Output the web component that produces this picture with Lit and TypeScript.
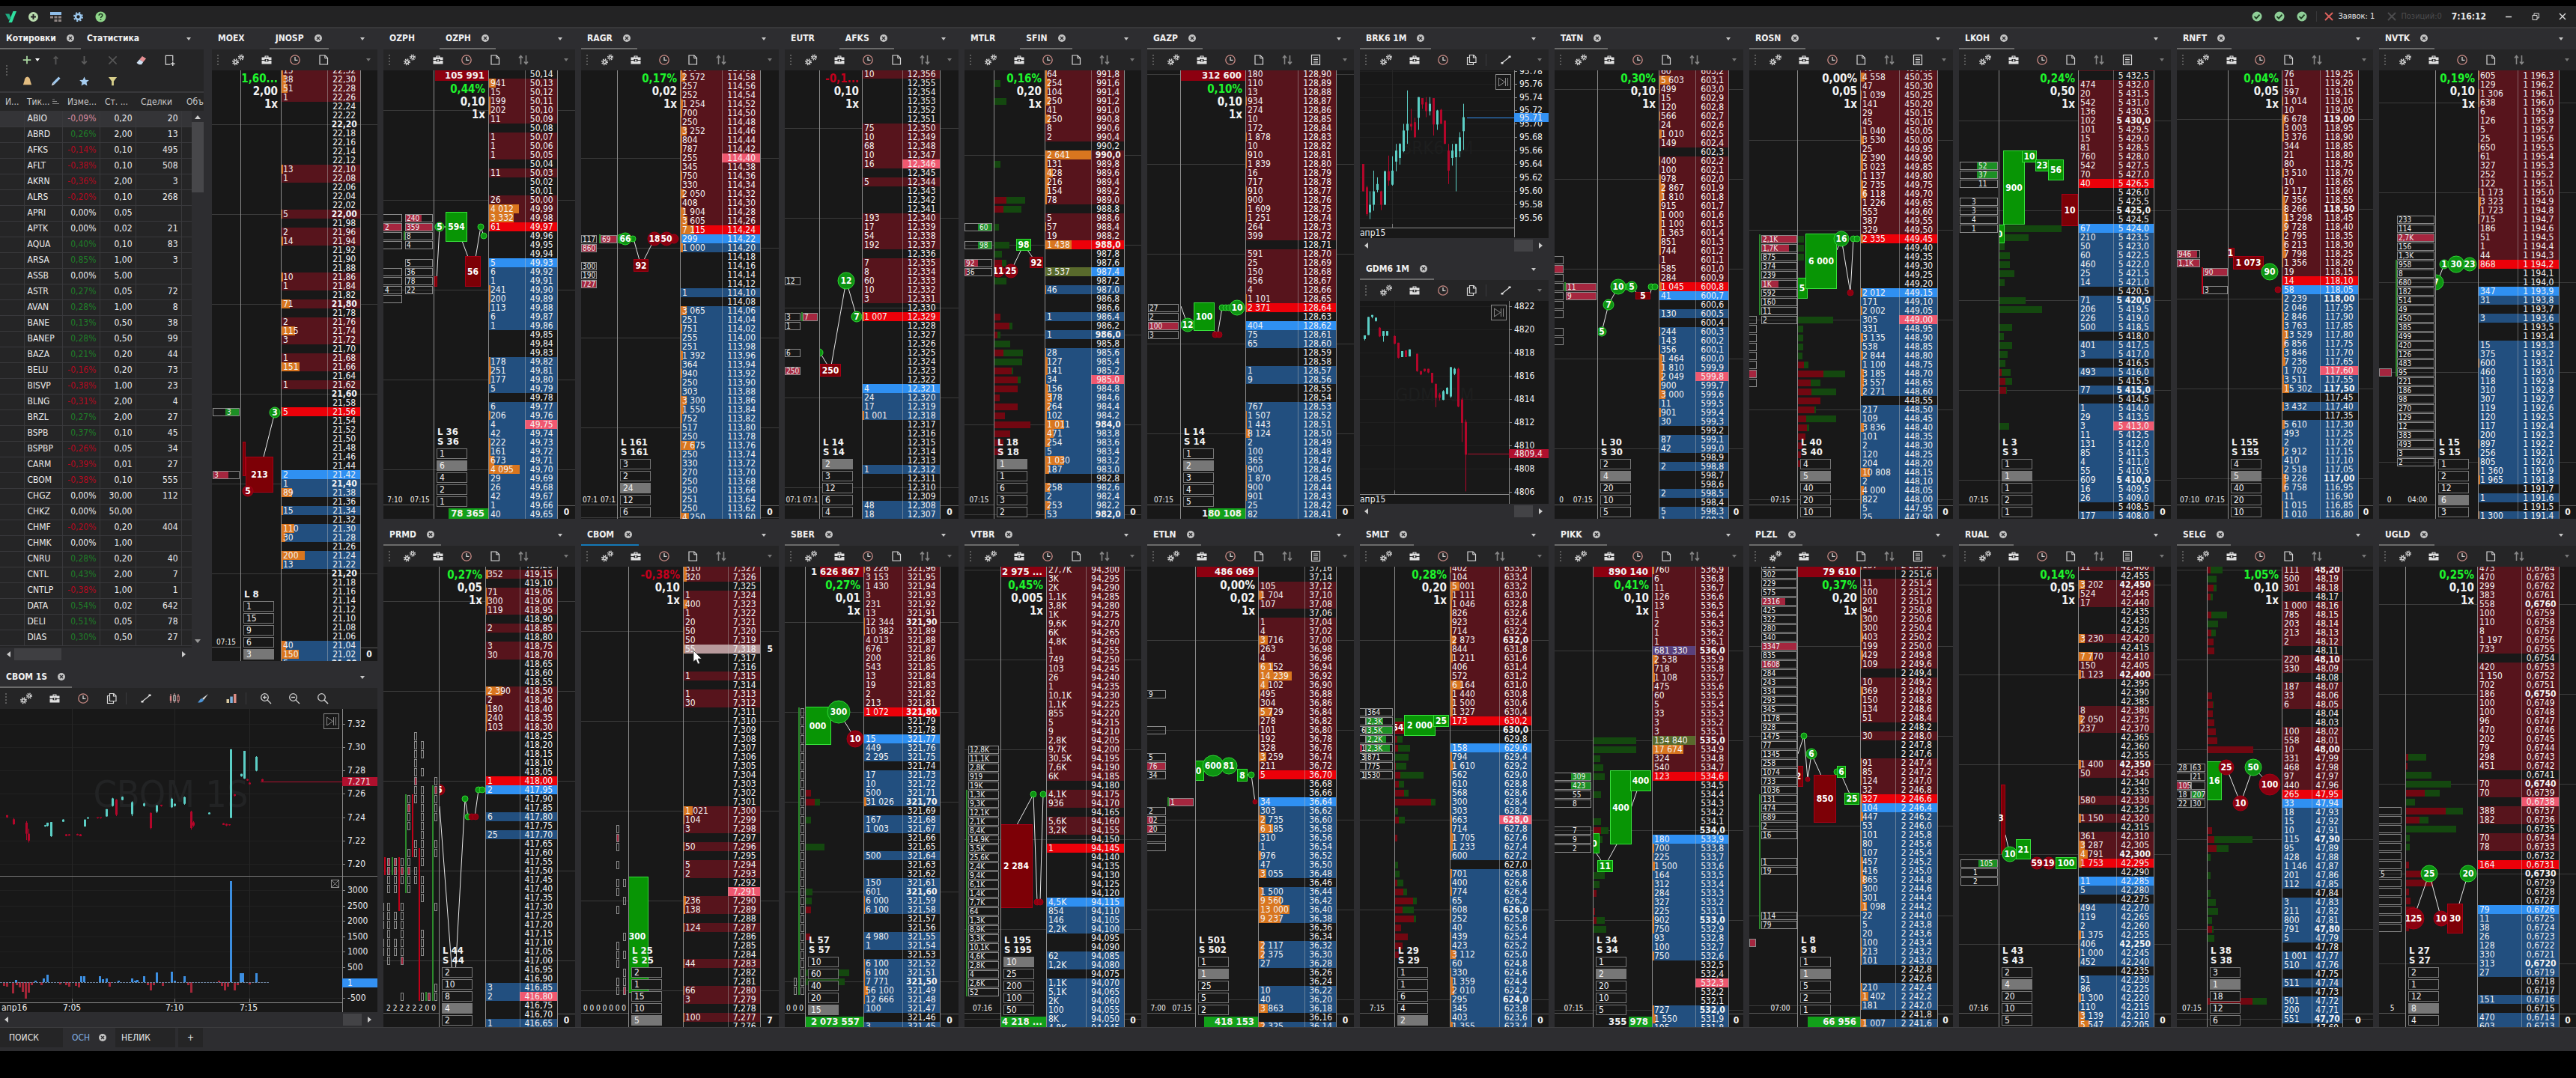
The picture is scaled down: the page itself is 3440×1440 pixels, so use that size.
import { LitElement, html, svg, css, nothing } from "lit";
import { customElement, property } from "lit/decorators.js";
import { classMap } from "lit/directives/class-map.js";

const base = css`
  * { box-sizing: border-box; }
  button { font: inherit; color: inherit; background: none; border: 0; padding: 0; margin: 0; cursor: default; }
  svg { display: block; }
`;

/* ---------- icons (16 x 16) ---------- */
const gear = (cx: number, cy: number, r: number, color: string, hole = "#252526") => svg`
  <circle cx=${cx} cy=${cy} r=${r} fill=${color}/>
  <circle cx=${cx} cy=${cy} r=${r + 0.8} fill="none" stroke=${color} stroke-width="1.8" stroke-dasharray=${((r + 0.8) * Math.PI) / 8}/>
  <circle cx=${cx} cy=${cy} r=${r * 0.45} fill=${hole}/>`;

const ICONS: Record<string, unknown> = {
  gears: svg`${gear(4.5, 10.8, 2.8, "#d6d6d6")}${gear(12, 4.6, 2.4, "#d6d6d6")}`,
  brief: svg`<path d="M5.500 4.500V2.500h5v2h4V8h-4V7h-5v1h-4V4.500zM6.700 4.500h2.600V3.500H6.700z" fill="#e0e0e0"/><path d="M1.500 9h4v1.200h5V9h4v4.500h-13z" fill="#e0e0e0"/><rect x="7" y="7.600" width="2" height="2" fill="#e0e0e0"/>`,
  clock: svg`<circle cx="8" cy="8" r="6.200" fill="none" stroke="#c98a84" stroke-width="1.300"/><path d="M8 4v4.400h3.500" fill="none" stroke="#d8d8d8" stroke-width="1.300"/>`,
  page: svg`<path d="M3 2h7l3.500 3.500V14H3z" fill="none" stroke="#d8d8d8" stroke-width="1.200"/><path d="M9.800 2v3.800h3.700" fill="none" stroke="#d8d8d8"/>`,
  copy: svg`<path d="M5.500 1.500h5.500l3 3v7h-8.500z" fill="none" stroke="#d8d8d8" stroke-width="1.200"/><path d="M10.500 1.500v3.500H14M5.500 4.500h-3v10h8v-3" fill="none" stroke="#d8d8d8" stroke-width="1.200"/>`,
  sort: svg`<path d="M4.500 14V3M2 5.500 4.500 2.500 7 5.500M11.500 2v11M9 10.500l2.500 3 2.500-3" fill="none" stroke="#868686" stroke-width="1.600"/>`,
  list: svg`<rect x="2.500" y="1.500" width="11" height="13" fill="none" stroke="#d8d8d8" stroke-width="1.200"/><path d="M5 5h6M5 7.500h6M5 10h6M5 12h6" stroke="#d8d8d8"/>`,
  line: svg`<path d="M3 12 13 4" stroke="#d8d8d8" stroke-width="1.200"/><rect x="1.500" y="11" width="3" height="2.500" fill="#e6e6e6"/><rect x="11.500" y="2.500" width="3" height="2.500" fill="#e6e6e6"/>`,
  candles: svg`<path d="M3 2v12M8 1v13M13 2v12" stroke="#d99"/><rect x="1.800" y="5" width="2.400" height="6" fill="#d88"/><rect x="6.800" y="4" width="2.400" height="7" fill="#252526" stroke="#d8d8d8"/><rect x="11.800" y="5" width="2.400" height="6" fill="#252526" stroke="#d88"/>`,
  brush: svg`<path d="M15 2 7 8l2 2z" fill="#dcdcdc"/><path d="M7 8l2 2c-1 3-4 3.500-8 3.500 2-1.500 2.500-5 6-5.500z" fill="#4d94d6"/>`,
  bars: svg`<rect x="1.500" y="9" width="3.500" height="5" fill="#d9c9a0"/><rect x="6.300" y="5.500" width="3.500" height="8.500" fill="#7fb2de"/><rect x="11" y="2" width="3.500" height="12" fill="#dd8d84"/>`,
  zin: svg`<circle cx="6.500" cy="6.500" r="4.800" fill="none" stroke="#d0d0d0" stroke-width="1.300"/><path d="M10 10l5 5M4 6.500h5M6.500 4v5" stroke="#d0d0d0" stroke-width="1.300"/>`,
  zout: svg`<circle cx="6.500" cy="6.500" r="4.800" fill="none" stroke="#d0d0d0" stroke-width="1.300"/><path d="M10 10l5 5M4 6.500h5" stroke="#d0d0d0" stroke-width="1.300"/>`,
  zoom: svg`<circle cx="6.500" cy="6.500" r="4.800" fill="none" stroke="#d0d0d0" stroke-width="1.300"/><path d="M10 10l5 5" stroke="#d0d0d0" stroke-width="1.600"/>`,
  add: svg`<path d="M8 2v12M2 8h12" stroke="#a9d6a0" stroke-width="2"/>`,
  up: svg`<path d="M8 14V3M5 6l3-3 3 3" fill="none" stroke="#555" stroke-width="2"/>`,
  down: svg`<path d="M8 2v11M4.500 9.500 8 13l3.500-3.500" fill="none" stroke="#5c5c5c" stroke-width="2"/>`,
  del: svg`<path d="M2.500 2.500l11 11M13.500 2.500l-11 11" stroke="#555" stroke-width="1.800"/>`,
  eraser: svg`<path d="M9.500 2l5.500 3.500-4 5-5.500-3.500z" fill="#e58f93"/><path d="M5.500 7l5.500 3.500-2.500 3.500H5l-3.500-2.300z" fill="#cfe0f2"/>`,
  frame: svg`<path d="M9 14H2.500V1.500h10V9" fill="none" stroke="#d8d8d8" stroke-width="1.300"/><path d="M12.500 10v6M9.500 13h6" stroke="#d8d8d8" stroke-width="1.500"/>`,
  bell: svg`<path d="M8 1.500c3 .5 4 3 4.200 6L14 13H2l1.800-5.500c.2-3 1.200-5.500 4.200-6z" fill="#e3bd80"/>`,
  pencil: svg`<path d="M12 1.500 14.500 4 6 12.500 3.500 10z" fill="#9fc8ee"/><path d="M3.500 10 6 12.500l-4 2z" fill="#e4edf6"/>`,
  star: svg`<path d="M8 1.500l2 4.500 4.800.5-3.600 3.200 1 4.800L8 12l-4.200 2.500 1-4.800L1.200 6.500 6 6z" fill="#a6cdf0"/>`,
  funnel: svg`<path d="M2 2h12L9.500 8v6h-3V8z" fill="#d8cf8a"/>`,
};
const icon = (name: string, size = 16) => html`<svg width=${size} height=${size} viewBox="0 0 16 16" aria-hidden="true">${ICONS[name]}</svg>`;
const closeDot = html`<svg width="10" height="10" viewBox="0 0 10 10" aria-hidden="true"><circle cx="5" cy="5" r="5" fill="#c4c4c4"/><path d="M3 3l4 4M7 3 3 7" stroke="#2d2d30" stroke-width="1.400"/></svg>`;
const caret = (color = "#c8c8c8") => html`<svg width="6" height="4" viewBox="0 0 6 4" aria-hidden="true"><path d="M0 0h6L3 4z" fill=${color}/></svg>`;

/* ---------- ladder data ---------- */
type Mark = (string | number)[];
interface Ladder {
  cols: number[];
  from: number; step: number; dec: number;
  off: number;
  major: number; bold?: boolean;
  vols: string;
  ask?: string; bid?: string; pink?: string; hot?: string;
  unit?: number;
  fills?: Record<string, string>;
  total?: string; totalFill?: number;
  pct: string; dir: "up" | "dn" | "eq"; tick: string;
  ls: string[]; boxes: string[]; sel: number;
  sum?: string; sumFill?: number;
  times: string[]; right: string;
  clusters?: [number, number, number, string, number?][];
  vlines?: [number, number, number, string][];
  profile?: number[][];
  marks?: Mark[];
  side?: [number, string];
  pointer?: boolean;
}
interface Panel { tabs: string[]; active?: boolean; tools: string[]; ladder: Ladder; }

const T5 = ["gears", "brief", "clock", "page", "sort"];
const T6 = [...T5, "list"];

const JNOSP: Panel = {
  tabs: ["MOEX", "JNOSP"], tools: ["gears", "brief", "clock", "page"],
  ladder: {
    cols: [38, 54, 63, 44, 22], from: 22.32, step: 0.02, dec: 2, off: -6, major: 6, bold: true, unit: 6.4,
    vols: "15 38 51 1 .7 13 1 .3 5 . 2 14 .3 10 1 . 71 . 2 115 3 . 1 151 . 1 .2 5 .6 2 1 89 . 15 . 110 30 . 200 13 .8 40 150 5",
    ask: "21,56", bid: "21,42", pct: "1,60...", dir: "up", tick: "2,00",
    ls: ["L 8"], boxes: ["1", "15", "9", "6", "3"], sel: 4, times: ["07:15"], right: "0",
    clusters: [[1, 36, 38, "3~G50"], [1, 36, 45, "3~r60"]],
    marks: [["p", 10, 562, 24, 540, 45, 457], ["r", 2, 496, 4, 46, "", "r"], ["r", 6, 516, 37, 48, "213", "r"], ["c", 45, 457, 7, "3", "g"], ["c", 9, 562, 7, "5", "r"]],
  },
};

const TOP: (Panel | null)[] = [
  { tabs: ["OZPH", "OZPH"], tools: T5, ladder: {
    cols: [67, 73, 50, 43, 23], from: 50.14, step: 0.01, dec: 2, off: -1, major: 4, unit: 100,
    vols: ". 941 15 199 202 11 . 1 1 1 . 11 .2 26 4012 3332 61 .3 5 6 1 241 200 113 6 1 .3 178 251 177 5 . 6 206 4 42 222 161 673 4095 29 26 42 1 40",
    ask: "49,97", bid: "49,93", pink: "49,75", total: "105 991", totalFill: 71, pct: "0,44%", dir: "up", tick: "0,10",
    ls: ["L 36", "S 36"], boxes: ["1", "6", "4", "2", "1"], sel: 1, sum: "78 365", sumFill: 53, times: ["7:10", "07:15"], right: "0",
    clusters: [[-2, 27, 16, "- 2~r100 - - _ _ - - 4 -"], [29, 37, 16, "240~r60 359~r100 8 4 _ 5 36 78 22"]],
    vlines: [[27, 18, 18, "g"]],
    marks: [["p", 3, 282, 7, 209, 30, 209, 52, 268, 62, 209, 66, 221], ["r", 0, 275, 4, 14, "", "r"], ["c", 7, 209, 6, "5", "g"], ["r", 15, 189, 29, 40, "594", "g"], ["r", 41, 248, 21, 41, "56", "r"], ["c", 62, 209, 4, "", "g"], ["c", 66, 221, 4, "", "g"]],
  } },
  { tabs: ["RAGR"], tools: T5, ladder: {
    cols: [48, 84, 57, 51, 24], from: 114.6, step: 0.02, dec: 2, off: -9, major: 0, unit: 400,
    vols: "600 2572 257 252 1254 700 250 3252 804 787 255 345 750 330 2050 408 1904 3605 7115 299 1000 .4 1 . 3065 251 751 255 251 1392 364 940 250 303 3300 1550 752 517 250 7675 250 330 270 250 250 251 250 4250",
    ask: "114,24", bid: "114,22", pink: "114,40", pct: "0,17%", dir: "up", tick: "0,02",
    ls: ["L 161", "S 161"], boxes: ["3", "2", "24", "12", "6"], sel: 2, times: ["07:1", "07:1"], right: "0",
    clusters: [[0, 21, 19, "117 860~r100 _ 300 190 727~r100"], [26, 22, 19, "69~r100"]],
    vlines: [[24, 19, 19, "g"]],
    marks: [["p", 21, 225, 31, 261, 49, 225], ["c", 4, 225, 6, "", "g"], ["c", 20, 225, 4, "", "g"], ["c", 10, 225, 8, "66", "g"], ["r", 21, 252, 20, 17, "92", "r"], ["c", 75, 225, 6, "", "r"], ["c", 49, 225, 9, "18", "r"], ["c", 65, 225, 9, "50", "r"]],
  } },
  { tabs: ["EUTR", "AFKS"], tools: T5, ladder: {
    cols: [46, 57, 55, 50, 24], from: 12.356, step: 0.001, dec: 3, off: -1, major: 6, unit: 500,
    vols: "10 .5 75 10 68 10 16 . 5 .3 193 17 54 192 . 7 8 60 10 3 . 1007 .7 4 24 17 1001 .5 1 .3 48 18",
    ask: "12,329", bid: "12,321", pink: "12,346", pct: "-0,1...", dir: "dn", tick: "0,10",
    ls: ["L 14", "S 14"], boxes: ["2", "3", "12", "6", "4"], sel: 0, times: ["07:1", "07:1"], right: "0",
    clusters: [[0, 21, 23, "12 _ _ _ 3 1 _ _ 6 _ 250~r100"], [24, 20, 27, "7~r100"]],
    vlines: [[22, 27, 27, "g"]],
    marks: [["p", 0, 377, 14, 400, 35, 281, 49, 329], ["c", -1, 377, 5, "", "g"], ["r", 0, 392, 28, 17, "250", "r"], ["c", 35, 281, 11, "12", "g"], ["c", 49, 329, 7, "7", "g"]],
  } },
  { tabs: ["MTLR", "SFIN"], tools: T5, ladder: {
    cols: [39, 68, 63, 44, 22], from: 991.8, step: 0.2, dec: 1, off: -1, major: 9, bold: true, unit: 41,
    vols: "64 254 104 250 41 250 8 2 . 2641 131 428 216 154 78 . 5 57 19 1438 .2 3537 . 46 .2 1 . 1 . 28 127 141 34 156 378 264 102 1011 471 254 5 1030 187 . 258 2 253 53",
    fills: { "3537": "olive" },
    ask: "988,0", bid: "987,4", pink: "985,0", pct: "0,16%", dir: "up", tick: "0,20",
    ls: ["L 18", "S 18"], boxes: ["1", "1", "6", "3", "2"], sel: 0, times: ["07:15"], right: "0",
    clusters: [[0, 37, 17, "60~G50 _ 98~G50 _ 92~r50 36~r12"]],
    profile: [[1, 0, 8], [3, 0, 16], [10, 0, 8], [14, 16, 25], [15, 12, 24], [17, 0, 6], [19, 0, 20], [20, 0, 10], [21, 10, 6], [23, 0, 16], [27, 8, 0], [28, 20, 4], [29, 4, 4], [30, 0, 21], [31, 12, 26], [32, 0, 37], [33, 23, 2], [34, 31, 4], [35, 31, 0], [36, 7, 0], [37, 31, 0], [38, 14, 0], [39, 48, 0], [40, 21, 0], [41, 12, 0], [42, 10, 0]],
    marks: [["p", 22, 268, 39, 233, 56, 257], ["c", 5, 268, 8, "11", "r"], ["c", 22, 268, 9, "25", "r"], ["r", 29, 225, 20, 16, "98", "g"], ["r", 47, 249, 18, 15, "92", "r"]],
  } },
  { tabs: ["GAZP"], tools: T6, ladder: {
    cols: [44, 87, 71, 51, 23], from: 128.9, step: 0.01, dec: 2, off: -1, major: 0, unit: 1600,
    vols: "180 110 13 934 274 10 172 1878 10 910 1839 16 717 910 900 1609 1251 264 399 . 591 25 150 456 4 1101 2371 . 404 75 65 .2 1 9 .2 767 1507 1443 8124 2 100 365 900 1870 900 901 25 82",
    ask: "128,64", bid: "128,62", total: "312 600", totalFill: 86, pct: "0,10%", dir: "up", tick: "0,10",
    ls: ["L 14", "S 14"], boxes: ["1", "2", "3", "4", "5"], sel: 1, sum: "180 108", sumFill: 50, times: ["07:15"], right: "0",
    clusters: [[1, 41, 26, "27 2 100~r100 3"]],
    marks: [["p", 0, 315, 9, 340, 30, 330, 49, 353, 55, 317, 75, 317], ["c", 9, 340, 9, "12", "g"], ["r", 17, 310, 28, 38, "100", "g"], ["c", 46, 353, 4, "", "r"], ["c", 51, 353, 4, "", "r"], ["c", 55, 317, 4, "", "g"], ["c", 60, 317, 4, "", "g"], ["c", 64, 317, 4, "", "g"], ["c", 75, 317, 10, "10", "g"]],
  } },
  null,
  { tabs: ["TATN"], tools: T5, ladder: {
    cols: [57, 82, 50, 44, 19], from: 603.2, step: 0.1, dec: 1, off: -5, major: 2, unit: 400,
    vols: "60 5603 499 15 120 566 24 1010 149 . 400 100 978 2867 1810 915 1000 1100 1363 851 744 1 585 284 1045 41 . 130 . 244 143 356 1464 1810 2049 900 3000 11 901 30 . 87 42 . 2 .2 2 . 5 1",
    ask: "600,8", bid: "600,7", pink: "599,8", pct: "0,30%", dir: "up", tick: "0,10",
    ls: ["L 30", "S 30"], boxes: ["2", "4", "20", "10", "5"], sel: 1, times: ["0", "07:15"], right: "0",
    clusters: [[-1, 13, 21, "- -~r100 - - - - - _ - -"], [15, 41, 24, "11~r100 9~r100"]],
    vlines: [[13, 24, 24, "g"]],
    marks: [["p", 5, 349, 14, 313, 27, 289, 45, 289, 55, 301, 69, 301, 72, 289], ["c", 5, 349, 6, "5", "g"], ["c", 14, 313, 7, "7", "g"], ["c", 38, 289, 4, "", "g"], ["c", 27, 289, 10, "10", "g"], ["c", 45, 289, 7, "5", "g"], ["r", 50, 296, 20, 10, "5", "r"], ["c", 71, 289, 4, "", "g"], ["c", 76, 289, 4, "", "g"]],
  } },
  { tabs: ["ROSN"], tools: T6, ladder: {
    cols: [64, 84, 53, 51, 20], from: 450.4, step: 0.05, dec: 2, off: -9, major: 8, unit: 900,
    vols: "46 4558 47 1039 141 29 45 1040 3530 25 2390 3023 1137 2735 6118 1226 553 387 329 2335 .5 2012 171 2002 305 331 3135 538 2844 1100 3185 3557 2271 . 217 109 3836 101 2 120 204 10808 2 4000 822 5 25",
    ask: "449,45", bid: "449,15", pink: "449,00", pct: "0,00%", dir: "eq", tick: "0,05",
    ls: ["L 40", "S 40"], boxes: ["4", "5", "40", "20", "10"], sel: 1, times: ["", "07:15"], right: "0",
    clusters: [[-1, 11, 28, "- - - - - - -~r100 -"], [16, 48, 19, "2,1K~r100 1,7K~r78 875 374 239 1K~r48 592 160 11 2"]],
    vlines: [[13, 19, 27, "g"]],
    profile: [[19, 0, 8], [20, 0, 8], [21, 0, 8], [28, 0, 47], [29, 0, 7], [30, 0, 7], [31, 0, 7], [32, 0, 6], [33, 8, 6], [34, 34, 29], [35, 17, 13], [36, 18, 33], [37, 30, 0], [38, 22, 2], [39, 11, 40], [40, 12, 3], [41, 10, 0], [42, 6, 0], [43, 4, 0], [44, 4, 0]],
    marks: [["p", 52, 240, 58, 225, 70, 297, 74, 225], ["r", -2, 277, 15, 28, "5", "g"], ["r", 10, 218, 42, 74, "6 000", "g"], ["c", 58, 225, 10, "16", "g"], ["c", 74, 225, 4, "", "g"], ["c", 79, 225, 4, "", "g"], ["c", 70, 297, 4, "", "r"]],
  } },
  { tabs: ["LKOH"], tools: T6, ladder: {
    cols: [53, 106, 47, 55, 22], from: 5433, step: 0.5, dec: 1, off: -11, major: 6, bold: true,
    vols: "422 . 474 20 542 136 102 101 15 81 760 542 70 40 .4 67 210 50 60 460 25 14 . 71 206 226 500 . 401 3 . 493 . 77 . 1 29 3 11 131 85 4 55 609 16 26 . 177",
    ask: "5 426,5", bid: "5 424,0", pink: "5 413,0", pct: "0,24%", dir: "up", tick: "0,50",
    ls: ["L 3", "S 3"], boxes: ["1", "1", "1", "2", "1"], sel: 1, times: ["07:15"], right: "0",
    clusters: [[1, 51, 11, "52~G54 37~G54 11", 24], [1, 51, 15, "3 3 4 1", 15]],
    profile: [[18, 0, 83], [19, 0, 39], [20, 0, 7], [21, 0, 14], [22, 0, 14], [23, 0, 20], [24, 0, 7], [26, 0, 35], [27, 0, 57], [29, 0, 17], [30, 0, 6], [31, 0, 17], [32, 0, 11], [33, 0, 8], [34, 3, 12], [35, 8, 9], [36, 9, 1], [40, 0, 13]],
    marks: [["r", -6, 206, 13, 25, "0", "g"], ["r", 5, 107, 29, 99, "900", "g"], ["r", 30, 107, 20, 16, "10", "g"], ["r", 48, 119, 18, 16, "23", "g"], ["r", 65, 119, 21, 28, "56", "g"], ["r", 83, 165, 22, 43, "10", "r"]],
  } },
  { tabs: ["RNFT"], tools: T5, ladder: {
    cols: [68, 72, 51, 52, 19], from: 119.25, step: 0.05, dec: 2, off: -1, major: 5, bold: true, unit: 1700,
    vols: "76 11 597 1014 10 6678 3003 3376 344 21 80 3510 10 2117 7356 8266 13298 9728 2795 6213 7798 1356 19 14 58 2239 2046 2846 3763 13529 6856 3846 7236 1702 3511 15302 . 3432 . 5610 493 2 2912 410 2518 9226 6758 11 1015 1010",
    ask: "118,10", bid: "118,05", pink: "117,60", pct: "0,04%", dir: "up", tick: "0,05",
    ls: ["L 155", "S 155"], boxes: ["4", "5", "40", "20", "10"], sel: 1, times: ["07:10", "07:15"], right: "0",
    clusters: [[0, 31, 20, "946~r90 1,1K~r100"], [35, 33, 22, "90~r100 _ 3"]],
    vlines: [[33, 22, 24, "r"]],
    marks: [["r", -3, 237, 11, 13, "1", "r"], ["r", 6, 248, 41, 18, "1 073", "r"], ["c", 55, 269, 11, "90", "g"], ["c", 66, 293, 4, "", "r"]],
  } },
  { tabs: ["NVTK"], tools: T5, ladder: {
    cols: [75, 57, 53, 56, 22], from: 1196.4, step: 0.1, dec: 1, off: -11, major: 4, unit: 1100,
    vols: "30 605 129 1306 638 6 126 5 25 650 61 327 252 122 1173 3323 1723 715 186 51 1 44 868 .2 347 31 . 3 .2 15 375 600 460 118 310 307 119 120 117 200 897 256 805 1360 1965 . 1 . 1300",
    ask: "1 194,2", bid: "1 193,9", pct: "0,19%", dir: "up", tick: "0,10",
    ls: ["L 15", "S 15"], boxes: ["1", "2", "12", "6", "3"], sel: 3, times: ["0", "04:00"], right: "0",
    clusters: [[0, 17, 34, "-~r100"], [24, 50, 17, "233 114 2,7K~r100 156 1,3K 958 8 680 182 514 49 450 385 499 420 126 483 95 221 186 98 270 129 12 383 493 3 2"]],
    vlines: [[22, 22, 34, "g"]],
    marks: [["p", 3, 280, 11, 259], ["c", 0, 283, 10, "7", "g"], ["c", 11, 259, 6, "1", "g"], ["c", 45, 259, 9, "23", "g"], ["c", 27, 259, 11, "30", "g"]],
  } },
];

const BOTTOM: Panel[] = [
  { tabs: ["PRMD"], tools: T5, ladder: {
    cols: [74, 62, 46, 51, 23], from: 419.2, step: 0.05, dec: 2, off: -8, major: 4, unit: 109,
    vols: ". 352 . 71 300 119 . 2 . 3 30 .3 2390 2 180 240 103 .5 1 2 .2 6 . 25 .16 3 2 .2 1",
    ask: "418,00", bid: "417,95", pink: "416,80", pct: "0,27%", dir: "up", tick: "0,05",
    ls: ["L 44", "S 44"], boxes: ["2", "10", "8", "4", "2"], sel: 3, times: ["2 2 2 2 2 2 0 0"], right: "0",
    clusters: [
      [41, 4, 19, "- - - - - -~r100 - - _ _ _ _ - - _ - -"], [50, 4, 20, "- - _ - _ - - - - - - - - - _ - - - _ _ _ - - - _ _ _ _ -"],
      [32, 4, 26, "- -~r100 - - _ _ - - -~r100 - -"], [23, 4, 33, "- -~r100 - _ _ - - - - - - -~r100 _ _ _ -"],
      [14, 4, 33, "-~r100 -~r100 - - _ _ - - _ - -"], [5, 4, 33, "-~r100 -~r100 - - _ - - - - - - -"], [-3, 4, 38, "- - - _ - -"],
      [68, 4, 24, "- -~r100 - - - _ _ - - _ _ _ _ _ - _ _ _ _ _ _ _ _ - -"], [59, 4, 48, "-~r100"]],
    vlines: [[29, 26, 36, "g"], [38, 26, 32, "r"], [1, 33, 34, "r"], [11, 33, 34, "g"], [20, 33, 38, "r"], [47, 32, 48, "r"], [65, 25, 48, "g"], [56, 48, 48, "g"]],
    marks: [["p", 0, 320, 17, 545, 21, 545, 34, 310, 38, 334, 47, 334, 52, 298], ["c", 0, 298, 7, "5", "r"], ["c", 34, 310, 4, "", "g"], ["c", 38, 334, 4, "", "g"], ["c", 43, 334, 4, "", "r"], ["c", 48, 334, 4, "", "r"], ["c", 52, 298, 4, "", "g"], ["c", 57, 298, 4, "", "g"]],
  } },
  { tabs: ["CBOM"], active: true, tools: T5, ladder: {
    cols: [63, 73, 61, 43, 24], from: 7.327, step: 0.001, dec: 3, off: -4, major: 7, unit: 85,
    vols: "310 320 . 1 400 1 20 50 50 55 .2 1 . 1 30 .11 1021 104 3 . 50 . 5 2 .2 236 138 . 124 .3 44 .2 66 3 . 100 .",
    pink: "7,291", hot: "7,318", pct: "-0,38%", dir: "dn", tick: "0,10",
    ls: ["L 25", "S 25"], boxes: ["2", "1", "15", "10", "5"], sel: 4, times: ["0 0 0 0 0 0 0"], right: "7",
    clusters: [[47, 4, 29, "- -~r100 - _ - _ - - _ - _ _ _ - - - _ - -"], [56, 4, 35, "- _ - _ _ _ - _ - _ - - -~r100"]],
    marks: [["r", -1, 414, 27, 155, "", "g"], ["t", 11, 494, "300"]],
    side: [9, "5"], pointer: true,
  } },
  { tabs: ["SBER"], tools: T5, ladder: {
    cols: [27, 78, 53, 50, 24], from: 321.96, step: 0.01, dec: 2, off: -4, major: 6, bold: true, unit: 11000,
    vols: "8226 3153 1430 3 231 13 12344 10382 4013 676 200 543 13 19 2 213 1072 .2 15 449 2295 . 17 10 500 31026 . 167 1003 .2 500 .2 150 601 6000 6100 .2 4980 1 . 6100 6100 7771 56100 12666 100 . 3",
    ask: "321,80", bid: "321,77", total: "1 626 867", totalFill: 58, pct: "0,27%", dir: "up", tick: "0,01",
    ls: ["L 57", "S 57"], boxes: ["10", "60", "40", "20", "15"], sel: 4, sum: "2 073 557", sumFill: 78, times: ["0 0 0"], right: "0",
    clusters: [[21, 5, 16, Array(32).fill("-").join(" ")], [12, 4, 46, "- -"]],
    vlines: [[18, 16, 47, "g"]],
    profile: [[25, 7, 0], [26, 12, 7], [28, 0, 7], [31, 0, 25], [36, 0, 9], [37, 0, 8], [38, 7, 0], [41, 6, 0], [45, 0, 58], [46, 0, 52]],
    marks: [["p", 44, 194, 66, 230], ["r", -2, 187, 36, 51, "000", "g"], ["c", 44, 194, 15, "300", "g"], ["c", 66, 230, 11, "10", "r"]],
  } },
  { tabs: ["VTBR"], tools: T5, ladder: {
    cols: [48, 61, 54, 51, 22], from: 94.3, step: 0.005, dec: 3, off: -2, major: 0,
    vols: "27,7K 3K 2K 1,1K 3,8K 1K 9,6K 6K 4,8K 1 749 103 26 1 10,1K 1,1K 855 5 9 2,8K 9,7K 30,5K 7,6K 6K . 4,1K 936 . 5,6K 3,2K . 1 .5 4,5K 854 146 2,2K .2 62 1,2K . 1,1K 5,1K 2K 100 8K 4,8K",
    ask: "94,145", bid: "94,115", total: "2 975 ...", totalFill: 61, pct: "0,45%", dir: "up", tick: "0,005",
    ls: ["L 195", "S 195"], boxes: ["10", "25", "200", "100", "50"], sel: 0, sum: "4 218 ...", sumFill: 61, times: ["07:16"], right: "0",
    clusters: [[5, 41, 20, "12,8K 11,1K 2,8K 919 19K 1,3K 9,3K 12,1K 2,1K 8,4K 14,9K 3,5K 25,6K 2,4K 9,4K 6,1K 1,4K 7,7K 64 1,3K 8,9K 3,3K 10,1K 4,6K 2,8K 4 2,6K 52"]],
    vlines: [[2, 25, 47, "g"]],
    marks: [["p", 15, 356, 43, 304, 48, 448, 52, 448, 56, 304], ["r", -2, 344, 44, 112, "2 284", "r"], ["c", 43, 304, 4, "", "g"], ["c", 56, 304, 4, "", "g"], ["c", 48, 448, 4, "", "r"], ["c", 52, 448, 4, "", "r"]],
  } },
  { tabs: ["ETLN"], tools: T6, ladder: {
    cols: [64, 84, 63, 42, 23], from: 37.16, step: 0.02, dec: 2, off: -4, major: 8, unit: 320,
    vols: ".2 105 1704 107 . 1 4 3716 263 4 6152 14239 4102 495 304 5729 278 101 192 328 3259 211 5 .2 34 303 2735 6185 310 1 976 47 3055 . 1500 9560 13000 9237 .2 2117 2375 27 .2 10 40 3863 . 2325",
    ask: "36,70", bid: "36,64", total: "486 069", totalFill: 82, pct: "0,00%", dir: "eq", tick: "0,02",
    ls: ["L 501", "S 502"], boxes: ["1", "1", "25", "5", "2"], sel: 1, sum: "418 153", sumFill: 72, times: ["7:00", "07:15"], right: "0",
    clusters: [[-2, 27, 14, "9 _ _ _ - _ _ 5 76~r100 34 _ _ _ 2 02~r40 20~r40 - -"], [29, 33, 26, "1~r100"]],
    vlines: [[27, 26, 26, "g"]],
    marks: [["p", 62, 278, 74, 278, 79, 314], ["r", -4, 259, 15, 27, "0", "g"], ["c", 44, 266, 11, "81", "g"], ["c", 23, 266, 14, "600", "g"], ["r", 55, 270, 14, 17, "8", "g"], ["c", 74, 278, 4, "", "g"], ["c", 79, 314, 3, "", "r"]],
  } },
  { tabs: ["SMLT"], tools: T5, ladder: {
    cols: [46, 74, 67, 43, 22], from: 633.6, step: 0.2, dec: 1, off: -4, major: 8, bold: true, unit: 425,
    vols: "402 104 5001 1111 1046 826 923 714 2873 844 1211 406 572 6164 1440 1500 1327 173 .2 158 794 1610 562 610 568 300 303 663 714 1705 1233 600 . 701 400 774 65 608 252 40 439 423 3112 60 330 1359 2010 295 345 403 1355",
    ask: "630,2", bid: "629,6", pink: "628,0", pct: "0,28%", dir: "up", tick: "0,20",
    ls: ["L 29", "S 29"], boxes: ["1", "1", "6", "4", "2"], sel: 4, times: ["7:15"], right: "0",
    clusters: [[-2, 10, 16, "- - 6 - 1~r60 3 - 1"], [8, 36, 16, "364 2,3K~g65 3,5K~g100 2,2K~g78 2,3K~g90 871 775 530"]],
    profile: [[17, 0, 10], [18, 10, 0], [19, 3, 7], [20, 4, 16], [21, 0, 18], [22, 1, 14], [23, 7, 31], [24, 5, 7], [25, 12, 6], [26, 48, 6], [27, 0, 4], [28, 5, 8], [30, 3, 0], [33, 0, 4], [34, 0, 6], [35, 3, 8], [36, 11, 5], [37, 24, 5], [38, 10, 15], [39, 25, 3], [40, 8, 0], [41, 17, 0], [42, 10, 0], [43, 5, 0]],
    marks: [["r", -4, 207, 16, 16, "54", "r"], ["r", 12, 198, 42, 28, "2 000", "g"], ["r", 51, 198, 21, 16, "25", "g"]],
  } },
  { tabs: ["PIKK"], tools: T5, ladder: {
    cols: [51, 79, 59, 44, 19], from: 536.9, step: 0.1, dec: 1, off: -2, major: 9, bold: true, unit: 430,
    vols: "760 6 11 126 13 1 2 1 1 681330 2538 718 1108 475 60 5 33 3 3 134840 17674 324 540 123 .6 180 700 225 1500 164 312 284 327 225 902 750 93 100 750 .5 727 1550 195",
    fills: { "681330": "purple", "134840": "olive" },
    ask: "534,6", bid: "533,9", pink: "532,3", total: "890 140", totalFill: 78, pct: "0,41%", dir: "up", tick: "0,10",
    ls: ["L 34", "S 34"], boxes: ["1", "2", "20", "10", "5"], sel: 1, sum: "355 978", sumFill: 31, times: ["07:15"], right: "0",
    clusters: [[-1, 50, 23, "309~G54 423~G54 55 8", 24], [-1, 50, 29, "7 9 2", 24]],
    profile: [[19, 0, 57], [20, 0, 57], [21, 0, 9], [22, 0, 13], [23, 0, 15], [25, 0, 10], [28, 0, 10], [29, 10, 10], [30, 0, 12], [31, 0, 8], [34, 0, 15], [35, 0, 8], [36, 4, 0], [38, 2, 0], [39, 4, 11], [40, 0, 17]],
    marks: [["p", 2, 380, 15, 400, 37, 360, 63, 285], ["r", -6, 356, 14, 27, "0", "g"], ["r", 5, 392, 21, 16, "11", "g"], ["r", 22, 272, 29, 99, "400", "g"], ["r", 49, 272, 28, 28, "400", "g"]],
  } },
  { tabs: ["PLZL"], tools: T6, ladder: {
    cols: [64, 84, 47, 57, 20], from: 2251.8, step: 0.2, dec: 1, off: -8, major: 9, unit: 140,
    vols: "137 . 11 100 201 94 300 300 403 199 429 109 . 10 369 150 134 51 . 30 .2 91 85 124 32 327 104 447 53 101 80 107 457 416 865 300 301 1098 22 5 20 100 213 101 .2 210 1402 181 . 1007",
    ask: "2 246,6", bid: "2 246,4", total: "79 610", totalFill: 84, pct: "0,37%", dir: "up", tick: "0,20",
    ls: ["L 8", "S 8"], boxes: ["1", "1", "5", "2", "1"], sel: 1, sum: "66 956", sumFill: 70, times: ["", "07:00"], right: "0",
    clusters: [[0, 9, 42, "-~r100"], [16, 48, 0, "311 302 229 575 2316~r68 425 322 280 340 3347~r100 835 1608~r48 284 243 334 293 345 1178 928 1475 77 1345 258 1074 733 1036 131 474 689 2 16 _ _ 1 19 _ _ _ _ 114 79"]],
    vlines: [[13, 26, 40, "g"]],
    marks: [["p", 0, 250, 8, 226, 13, 284, 18, 250, 36, 290], ["p", 56, 274, 72, 310], ["r", -6, 266, 13, 28, "2", "r"], ["c", 8, 226, 4, "", "g"], ["c", 13, 284, 3, "", "r"], ["c", 18, 250, 7, "6", "g"], ["r", 21, 278, 30, 64, "850", "r"], ["c", 52, 274, 4, "", "g"], ["r", 52, 266, 12, 16, "6", "g"], ["r", 62, 302, 20, 16, "25", "g"]],
  } },
  { tabs: ["RUAL"], tools: T6, ladder: {
    cols: [53, 106, 51, 51, 22], from: 42.46, step: 0.005, dec: 3, off: -6, major: 2, bold: true, unit: 410,
    vols: "11 . 3202 524 17 .3 3230 . 7770 150 1123 .3 8 2050 237 .3 1400 50 .2 580 . 1150 . 361 3287 4791 1753 . 11 5 . 494 119 2 1375 406 1000 452 . 51 86 1300 110 3139 5547",
    ask: "42,295", bid: "42,285", pct: "0,14%", dir: "up", tick: "0,05",
    ls: ["L 43", "S 43"], boxes: ["2", "4", "20", "10", "5"], sel: 1, times: ["07:16"], right: "0",
    clusters: [[2, 50, 33, "105~G50", 25], [2, 50, 34, "1 2", 16]],
    marks: [["p", 8, 358, 14, 384], ["r", 2, 291, 6, 93, "", "r"], ["t", 2, 336, "3"], ["c", 14, 384, 10, "10", "g"], ["r", 22, 364, 20, 27, "21", "g"], ["c", 50, 396, 8, "59", "r"], ["c", 66, 396, 8, "19", "r"], ["r", 75, 388, 28, 16, "100", "g"]],
  } },
  { tabs: ["SELG"], tools: T5, ladder: {
    cols: [40, 100, 40, 42, 40], from: 48.2, step: 0.01, dec: 2, off: -2, major: 0, bold: true,
    vols: "111 500 301 . 1000 785 203 213 2 . 220 330 . 187 33 6 .2 100 558 10 331 468 97 440 265 33 18 15 10 115 95 428 1146 201 112 . 3 211 800 791 5 . 1001 510 . 511 . 501 200 551 .",
    ask: "47,95", bid: "47,94", pct: "1,05%", dir: "up", tick: "0,10",
    ls: ["L 38", "S 38"], boxes: ["3", "1", "18", "12", "6"], sel: 1, times: ["07:15"], right: "0",
    clusters: [[-1, 20, 22, "28 - 105~r90 18 22"], [19, 19, 22, "63 21 - 207~g90 30"]],
    profile: [[0, 4, 16], [1, 0, 12], [2, 8, 4], [3, 4, 3], [5, 5, 21], [6, 0, 14], [7, 5, 6], [8, 8, 0], [9, 9, 0], [14, 6, 0], [15, 7, 1], [16, 7, 0], [17, 9, 0], [18, 11, 0], [19, 13, 0], [20, 61, 0], [29, 6, 0], [30, 9, 51], [31, 12, 16], [32, 0, 4], [34, 0, 4], [36, 0, 4], [37, 0, 11], [38, 0, 14], [39, 0, 6], [40, 6, 2], [41, 0, 9], [48, 60, 19]],
    marks: [["p", 9, 286, 25, 268, 44, 316, 61, 268, 83, 291], ["r", -1, 260, 20, 52, "16", "g"], ["c", 25, 268, 10, "25", "r"], ["c", 44, 316, 10, "10", "r"], ["c", 61, 268, 11, "50", "g"], ["c", 83, 291, 14, "100", "r"]],
  } },
  { tabs: ["UGLD"], tools: T5, ladder: {
    cols: [35, 96, 60, 50, 22], from: 0.6764, step: 0.0001, dec: 4, off: -4, major: 4, bold: true,
    vols: "473 470 299 383 558 100 110 8 1197 733 . 420 1150 702 186 100 100 96 470 202 79 298 451 . 70 70 . 388 182 . 70 78 . 164 .4 79 11 38 26 128 330 313 27 .2 151 . 470 603",
    ask: "0,6731", bid: "0,6726", pink: "0,6738", pct: "0,25%", dir: "up", tick: "0,10",
    ls: ["L 27", "S 27"], boxes: ["2", "1", "12", "8", "4"], sel: 3, times: ["5"], right: "0",
    clusters: [[-1, 31, 27, "- - - - - - - 5 - - - - - -"]],
    profile: [[21, 3, 24], [22, 2, 0], [23, 0, 34], [24, 0, 60], [25, 25, 20], [26, 0, 12], [27, 53, 23], [28, 18, 12], [29, 0, 67], [30, 0, 5], [31, 0, 5], [33, 4, 0], [34, 40, 0], [35, 36, 0], [36, 4, 0], [37, 6, 0], [38, 12, 0], [39, 6, 0], [40, 4, 0]],
    marks: [["p", 10, 470, 31, 410, 47, 470, 65, 470, 83, 410], ["c", 10, 470, 14, "125", "r"], ["c", 31, 410, 11, "25", "g"], ["c", 47, 470, 10, "10", "r"], ["r", 55, 450, 21, 40, "30", "r"], ["c", 83, 410, 11, "20", "g"]],
  } },
];

const group = (s: string) => s.replace(/\B(?=(\d{3})+$)/g, " ");
const expand = (s: string) =>
  s.split(" ").flatMap((t) => (/^\.\d*$/.test(t) ? Array(Number(t.slice(1) || 1)).fill("") : [t]));

/* ---------- price ladder ---------- */
@customElement("price-ladder")
class PriceLadder extends LitElement {
  @property({ attribute: false }) d!: Ladder;

  static styles = [base, css`
    :host { display: block; min-height: 0; font: 12px/12px "DejaVu Sans Condensed", "Noto Sans", sans-serif; color: #f2f2f2; }
    .body { position: relative; display: grid; grid-template-rows: minmax(0, 1fr); height: 100%; overflow: hidden;
      background-color: #181818; background-image: linear-gradient(#3b3b3b 1px, transparent 1px); background-size: 100% 120px; }
    .body > * { grid-row: 1; min-width: 0; min-height: 0; overflow: hidden; }
    .canvas { width: 100%; height: 100%; }
    .left { grid-column: 1; }
    .ticks { grid-column: 2; border-left: 1px solid #8b8b8b; }
    .small { font-size: 10px; fill: #eee; }
    .big { font-weight: bold; font-size: 12px; fill: #fff; text-anchor: middle; }
    .times { grid-column: 1; align-self: end; height: 32px; padding-bottom: 18px; }
    .times div { display: flex; justify-content: space-around; height: 14px; border-bottom: 1px solid #5a5a5a; font-size: 10px; line-height: 13px; white-space: pre; }
    .info { grid-column: 2; z-index: 1; display: flex; flex-direction: column; font-weight: bold; margin-left: 1px; }
    .figures { text-align: right; font-size: 15px; line-height: 17px; padding: 3px 4px 0 0; }
    .up { color: #1ef42c; }
    .dn { color: #c3001c; }
    .bar { flex: none; height: 14px; font-size: 13px; line-height: 14px; text-align: right; padding-right: 5px; white-space: nowrap; background-repeat: no-repeat; background-position: right; }
    .total { background-image: linear-gradient(#8d0010, #8d0010); }
    .sum { background-image: linear-gradient(#12a01a, #12a01a); }
    .pos { margin-top: auto; padding: 0 0 2px 3px; display: flex; flex-direction: column; gap: 2px; align-items: flex-start; }
    .side-total { font-size: 13px; line-height: 13px; padding: 0 0 1px 1px; }
    .lot { width: 41px; height: 14px; border: 1px solid #777; background: #181818; text-align: left; padding-left: 3px; font-weight: normal; line-height: 12px; }
    .lot.on { background: #777; }
    .depth { grid-column: 3 / 5; }
    table { width: 100%; table-layout: fixed; border-spacing: 0; border-collapse: separate; border-right: 1px solid #8b8b8b; }
    tr { height: 12px; }
    td { height: 12px; padding: 0; line-height: 12px; white-space: nowrap; overflow: hidden; background-repeat: no-repeat; }
    .v { padding-left: 2px; border-left: 1px solid #8b8b8b; background-origin: padding-box; }
    .p { text-align: center; border-left: 1px solid rgba(190, 190, 190, 0.45); }
    .ask td { background-color: #57141c; }
    .bid td { background-color: #224f7f; }
    .bask td { background-color: #ec0009; }
    .bbid td { background-color: #2f90f2; }
    .hot td { background-color: #b89a9c; }
    .major .p { font-weight: bold; }
    td.pink.p { background-color: #f05870; }
    td.olive.v { background-color: #596a2c; }
    td.purple.v { background-color: #59407c; }
    .edge { grid-column: 5; display: flex; flex-direction: column; justify-content: flex-end; font-weight: bold; text-align: center; }
    .edge span { border-top: 1px solid #5a5a5a; height: 18px; line-height: 17px; font-size: 12px; }
    .badge { position: absolute; right: 8px; font-weight: bold; }
    .pointer { position: absolute; left: 57%; top: 112px; overflow: visible; }
  `];

  private rows() {
    const d = this.d;
    const price = (i: number) => {
      const [a, b] = (d.from - i * d.step).toFixed(d.dec).split(".");
      return group(a) + "," + b;
    };
    const vols = expand(d.vols);
    const labels = vols.map((_, i) => price(i));
    const ask = d.ask ? labels.indexOf(d.ask) : vols.length;
    const bid = d.bid ? labels.indexOf(d.bid) : vols.length;
    return vols.map((v, i) => {
      const cls = {
        ask: !!v && i < ask, bask: i === ask, bbid: i === bid, bid: !!v && i > bid,
        hot: labels[i] === d.hot, major: !!d.bold && i % 10 === d.major,
      };
      const w = d.unit && /^\d+$/.test(v) ? Math.round(Number(v) / d.unit) : 0;
      const fill = d.fills?.[v];
      const bar = w > 0 && !fill
        ? `background-image:linear-gradient(#d9761f,#d9761f);background-size:${Math.min(w, d.cols[2])}px 100%` : "";
      return html`<tr class=${classMap(cls)}><td class="v ${fill ?? ""}" style=${bar}>${/^\d+$/.test(v) ? group(v) : v}</td><td class="p ${labels[i] === d.pink ? "pink" : ""}">${labels[i]}</td></tr>`;
    });
  }

  private clusterBoxes() {
    const d = this.d;
    const out: unknown[] = [];
    for (const [x, w, start, list, tx] of d.clusters ?? []) {
      list.split(" ").forEach((tok, k) => {
        if (tok === "_") return;
        const y = d.off + (start + k) * 12;
        const [text, f] = tok.split("~");
        const pct = f ? Number(f.slice(1)) / 100 : 0;
        const right = f && f[0] === "G";
        const fw = Math.round((w - 1) * pct);
        const fx = right ? x + w - 1 - fw : x;
        const color = f && f[0] === "r" ? "#a5263f" : "#1c8f24";
        out.push(svg`${f ? svg`<rect x=${fx} y=${y + 1} width=${fw} height="10" fill=${color}/>` : nothing}
          <rect x=${x + 0.5} y=${y + 1.5} width=${w - 1} height="10" fill="none" stroke="#8c8c8c"/>
          ${text && text !== "-" ? svg`<text class="small" x=${tx ? x + tx + 1 : right ? fx + 2 : Math.max(x, 0) + 2} y=${y + 10}>${text}</text>` : nothing}`);
      });
    }
    for (const [x, a, b, c] of d.vlines ?? [])
      out.push(svg`<rect x=${x} y=${d.off + a * 12} width="2" height=${(b - a + 1) * 12} fill=${c === "g" ? "#2c8a2c" : "#c00018"}/>`);
    return out;
  }

  private tickMarks() {
    const d = this.d;
    const bars = (d.profile ?? []).map(([i, r, g]) => {
      const y = d.off + i * 12 + 2;
      return svg`<rect x="0" y=${y} width=${r} height="9" fill="#720711"/><rect x=${r} y=${y} width=${g} height="9" fill="#14480f"/>`;
    });
    const shapes = (d.marks ?? []).map((m) => {
      const n = m as number[];
      if (m[0] === "p") return svg`<polyline points=${m.slice(1).join(" ")} fill="none" stroke="#e8e8e8" stroke-width="1"/>`;
      if (m[0] === "t") return svg`<text class="big" x=${n[1]} y=${n[2] + 4}>${m[3]}</text>`;
      const green = m[m.length - 1] === "g";
      if (m[0] === "c")
        return svg`<circle cx=${n[1]} cy=${n[2]} r=${n[3]} fill=${green ? "#0d9312" : "#8b0010"} stroke=${green ? "#2fd634" : "#a30014"}/>
          <text class="big" x=${n[1]} y=${n[2] + 4}>${m[4]}</text>`;
      return svg`<rect x=${n[1] + 0.5} y=${n[2] + 0.5} width=${n[3] - 1} height=${n[4] - 1} fill=${green ? "#089505" : "#7d0006"} stroke=${green ? "#38e23c" : "#a80016"}/>
        <text class="big" x=${n[1] + n[3] / 2} y=${n[2] + n[4] / 2 + 4}>${m[5]}</text>`;
    });
    return [bars, shapes];
  }

  render() {
    const d = this.d;
    const [c, t, v, p, r] = d.cols;
    return html`<div class="body" style="grid-template-columns:${c}fr ${t}fr ${v}fr ${p}fr ${r}fr;background-position:0 ${d.off + d.major * 12 + 6}px">
      <svg class="canvas left">${this.clusterBoxes()}</svg>
      <svg class="canvas ticks">${this.tickMarks()}</svg>
      <div class="times"><div>${d.times.map((x) => html`<span>${x}</span>`)}</div></div>
      <div class="info">
        ${d.total ? html`<div class="bar total" style="background-size:${d.totalFill}px 100%">${d.total}</div>` : nothing}
        <div class="figures"><div class=${d.dir}>${d.pct}</div><div>${d.tick}</div><div>1x</div></div>
        <div class="pos">
          <div class="side-total">${d.ls.map((x) => html`<div>${x}</div>`)}</div>
          ${d.boxes.map((b, i) => html`<button class="lot ${i === d.sel ? "on" : ""}">${b}</button>`)}
        </div>
        ${d.sum ? html`<div class="bar sum" style="background-size:${d.sumFill}px 100%">${d.sum}</div>` : nothing}
      </div>
      <div class="depth"><table style="margin-top:${d.off}px"><colgroup><col style="width:${(v / (v + p)) * 100}%"><col></colgroup><tbody>${this.rows()}</tbody></table></div>
      <div class="edge"><span>${d.right}</span></div>
      ${d.side ? html`<span class="badge" style="top:${d.off + d.side[0] * 12}px">${d.side[1]}</span>` : nothing}
      ${d.pointer ? html`<svg class="pointer" width="12" height="19" viewBox="0 0 12 19" aria-hidden="true"><path d="M0 0v15l3.500-3 2.500 6 2.500-1-2.500-6H11z" fill="#fff" stroke="#222" stroke-width=".7"/></svg>` : nothing}
    </div>`;
  }
}

/* ---------- docked panel: tabs, toolbar, content ---------- */
@customElement("dock-panel")
class DockPanel extends LitElement {
  @property({ attribute: false }) tabs: string[] = [];
  @property({ attribute: false }) tools: string[] = [];
  @property({ type: Number }) selected = -1;
  @property({ type: Boolean }) active = false;
  @property({ type: Boolean }) plain = false;

  static styles = [base, css`
    :host { display: flex; flex-direction: column; min-width: 0; min-height: 0; overflow: hidden; font: 12px/16px "DejaVu Sans Condensed", "Noto Sans", sans-serif; color: #f0f0f0; }
    .tabs { flex: none; display: flex; height: 28px; align-items: stretch; background: #2d2d30; }
    .tab { display: flex; align-items: center; gap: 14px; padding: 0 9px 0 8px; font-weight: bold; border-bottom: 2px solid transparent; white-space: nowrap; }
    .tab.on { border-bottom-color: #6b6b6b; }
    .tab.on.active { border-bottom-color: #1479b8; }
    .gap { width: 10px; }
    .more { margin-left: auto; width: 40px; display: grid; place-items: center; }
    .bar { flex: none; display: flex; height: 28px; align-items: center; background: #252526; }
    .grip { width: 16px; height: 14px; display: grid; place-items: center; }
    .grip::before { content: ""; width: 2px; height: 14px; background: repeating-linear-gradient(#5a5a5a 0 2px, transparent 2px 4px); }
    .tool { width: 38px; height: 24px; display: grid; place-items: center; flex: none; }
    .sep { width: 8px; height: 16px; border-left: 1px solid #3a3a3d; }
    .end { margin-left: auto; width: 24px; height: 24px; display: grid; place-items: center; }
    ::slotted(*) { flex: 1; min-height: 0; }
  `];

  render() {
    const on = this.selected < 0 ? this.tabs.length - 1 : this.selected;
    return html`
      <div class="tabs">
        ${this.tabs.map((t, i) => html`<div class="tab ${i === on ? "on" : ""} ${this.active ? "active" : ""}">
          <button>${t}</button>${i === on ? html`<button aria-label="Закрыть">${closeDot}</button>` : html`<span class="gap"></span>`}</div>`)}
        <button class="more" aria-label="Вкладки">${caret()}</button>
      </div>
      ${this.plain ? nothing : html`<div class="bar"><span class="grip"></span>
        ${this.tools.map((t) => (t === "|" ? html`<span class="sep"></span>` : html`<button class="tool" aria-label=${t}>${icon(t)}</button>`))}
        ${this.tools.includes("zoom") ? nothing : html`<button class="end" aria-label="Ещё">${caret("#777")}</button>`}
      </div>`}
      <slot></slot>`;
  }
}

/* ---------- charts ---------- */
interface Chart {
  w: number; h: number; axis: number; foot: number; split?: number;
  labels: [string, number][]; tag: [string, number, string]; tag2?: [string, number, string];
  from: number; times: [string, number][]; vgrid: number[];
  play: [number, number]; mark: string; markAt: [number, number, number]; markColor: string;
  plot: { x0: number; y0: number; kx: number; ky: number };
  candles: (number | string)[][]; volume?: (number | string)[][];
}

const BRK6: Chart = {
  w: 252, h: 223, axis: 206, foot: 210,
  labels: [["95.78", 1], ["95.76", 18], ["95.74", 36], ["95.72", 53], ["95.70", 71], ["95.68", 89], ["95.66", 107], ["95.64", 125], ["95.62", 143], ["95.60", 161], ["95.58", 179], ["95.56", 197]],
  tag: ["95.71", 63, "#3391f3"], from: 143, times: [["апр15", 0]], vgrid: [43], play: [181, 5], mark: "BRK6 1M", markAt: [103, 112, 24], markColor: "#1d1e1e",
  plot: { x0: 829, y0: 210, kx: 2.8, ky: 2.24 },
  candles: [[839, 490, 572, 490, 572, "r"], [853, 555, 645, 560, 640, "r"], [866, 572, 655, 612, 635, "c"], [880, 510, 630, 572, 612, "c"], [894, 530, 575, 550, 568, "c"], [908, 570, 628, 572, 612, "r"], [922, 510, 612, 512, 612, "c"], [936, 465, 555, 512, 540, "r"], [950, 467, 555, 510, 552, "c"], [964, 430, 512, 450, 483, "c"], [978, 428, 492, 430, 472, "c"], [992, 370, 455, 390, 452, "c"], [1006, 270, 430, 370, 390, "c"], [1020, 325, 390, 370, 378, "r"], [1034, 352, 412, 365, 410, "r"], [1048, 290, 388, 290, 352, "c"], [1062, 293, 325, 293, 312, "r"], [1076, 290, 350, 305, 332, "r"], [1090, 290, 345, 310, 332, "c"], [1104, 293, 405, 293, 372, "r"], [1118, 328, 388, 330, 372, "c"], [1132, 325, 370, 328, 370, "r"], [1146, 360, 430, 360, 430, "r"], [1160, 430, 550, 450, 510, "r"], [1174, 430, 495, 450, 472, "c"], [1188, 430, 572, 430, 470, "c"], [1202, 395, 470, 410, 452, "c"], [1216, 310, 448, 350, 392, "c"]],
};
const GDM6: Chart = {
  w: 252, h: 271, axis: 199, foot: 258,
  labels: [["4822", 7], ["4820", 38], ["4818", 69], ["4816", 100], ["4814", 131], ["4812", 162], ["4810", 193], ["4808", 224], ["4806", 255]],
  tag: ["4809.4", 204, "#b0102e"], from: 144, times: [["апр15", 0]], vgrid: [46], play: [175, 5], mark: "GDM6 1M", markAt: [100, 134, 24], markColor: "#1d1e1e",
  plot: { x0: 829, y0: 900, kx: 2.8, ky: 2.24 },
  candles: [[847, 1003, 1018, 1003, 1014, "c"], [861, 948, 1002, 948, 1002, "c"], [875, 942, 952, 942, 948, "c"], [889, 950, 962, 950, 960, "c"], [903, 978, 1008, 980, 1006, "r"], [917, 990, 1022, 990, 1005, "c"], [931, 990, 1004, 990, 1004, "c"], [959, 1003, 1030, 1005, 1028, "r"], [973, 1025, 1072, 1025, 1070, "r"], [987, 1050, 1068, 1050, 1068, "c"], [1001, 1048, 1068, 1048, 1068, "r"], [1015, 1045, 1066, 1045, 1066, "c"], [1043, 1058, 1112, 1058, 1110, "r"], [1057, 1110, 1122, 1110, 1120, "r"], [1071, 1103, 1112, 1103, 1110, "r"], [1085, 1103, 1116, 1103, 1114, "r"], [1099, 1115, 1145, 1115, 1145, "r"], [1113, 1148, 1218, 1148, 1190, "r"], [1127, 1175, 1198, 1180, 1190, "r"], [1141, 1167, 1197, 1170, 1196, "c"], [1155, 1158, 1180, 1160, 1178, "c"], [1169, 1098, 1190, 1098, 1186, "c"], [1183, 1100, 1122, 1103, 1118, "c"], [1197, 1100, 1218, 1103, 1216, "r"], [1211, 1190, 1322, 1195, 1265, "r"], [1225, 1255, 1470, 1262, 1360, "r"]],
};
const CBOM1S: Chart = {
  w: 504, h: 405, axis: 457, foot: 392, split: 223,
  labels: [["7.32", 20], ["7.30", 51], ["7.28", 82], ["7.26", 113], ["7.24", 145], ["7.22", 176], ["7.20", 207], ["3000", 242], ["2500", 263], ["2000", 283], ["1500", 304], ["1000", 324], ["500", 345], ["-500", 386]],
  tag: ["7.271", 97, "#b0102e"], tag2: ["1", 366, "#3391f3"], from: 348,
  times: [["апр16", 2], ["7:05", 84], ["7:10", 221], ["7:15", 320]], vgrid: [96, 233, 333], play: [432, 6], mark: "CBOM 1S", markAt: [228, 131, 50], markColor: "#222324",
  plot: { x0: 0, y0: 492, kx: 3, ky: 2.376 },
  candles: [[28, 829, 838, 829, 836, "r"], [54, 838, 860, 842, 858, "r"], [105, 848, 908, 853, 888, "r"], [115, 872, 916, 888, 910, "r"], [180, 860, 866, 861, 865, "c"], [190, 853, 865, 853, 863, "c"], [203, 851, 898, 851, 896, "c"], [253, 842, 850, 843, 850, "c"], [265, 889, 896, 890, 895, "r"], [275, 889, 894, 890, 894, "r"], [310, 888, 893, 889, 893, "r"], [320, 889, 896, 890, 896, "r"], [340, 843, 866, 843, 865, "c"], [352, 836, 840, 836, 840, "c"], [390, 836, 840, 836, 839, "r"], [402, 836, 840, 836, 839, "r"], [427, 810, 834, 810, 833, "c"], [451, 774, 802, 776, 800, "c"], [464, 778, 832, 780, 828, "r"], [490, 770, 782, 771, 781, "c"], [527, 785, 832, 788, 826, "c"], [577, 790, 802, 792, 800, "c"], [602, 820, 874, 822, 870, "r"], [626, 797, 822, 798, 818, "c"], [645, 796, 802, 796, 800, "r"], [688, 774, 806, 777, 804, "c"], [700, 792, 802, 793, 800, "c"], [739, 770, 796, 772, 793, "c"], [764, 815, 875, 818, 870, "r"], [775, 848, 866, 852, 862, "r"], [838, 820, 826, 821, 826, "c"], [895, 854, 860, 855, 860, "r"], [905, 856, 864, 857, 862, "r"], [917, 858, 862, 858, 861, "r"], [925, 620, 838, 620, 838, "c"], [940, 762, 770, 763, 768, "r"], [965, 698, 707, 698, 706, "c"], [977, 625, 714, 625, 713, "c"], [990, 714, 720, 715, 719, "r"], [1000, 724, 732, 726, 731, "r"], [1025, 642, 690, 644, 688, "c"], [1050, 714, 722, 715, 721, "r"]],
  volume: [[15, 5, "r"], [27, 6, "r"], [52, 15, "r"], [64, -3, "b"], [65, 4, "r"], [78, 7, "r"], [90, 13, "r"], [102, 22, "r"], [115, 14, "r"], [126, 4, "r"], [140, -2, "b"], [165, 4, "r"], [175, -5, "b"], [188, -10, "b"], [240, 3, "r"], [265, 4, "r"], [277, 6, "r"], [302, 5, "r"], [315, 7, "r"], [325, -8, "b"], [337, -8, "b"], [400, -8, "b"], [412, -4, "b"], [426, -5, "b"], [438, 6, "r"], [475, -2, "b"], [527, -5, "b"], [540, -2, "b"], [550, -3, "b"], [575, -8, "b"], [590, 4, "r"], [602, 11, "r"], [614, 4, "r"], [626, -13, "b"], [650, 5, "r"], [688, -14, "b"], [700, -2, "b"], [737, -8, "b"], [752, 4, "r"], [764, 14, "r"], [875, -2, "r"], [887, 5, "r"], [899, 11, "r"], [911, 6, "r"], [925, -135, "b"], [938, 11, "r"], [950, 4, "r"], [962, -12, "b"], [973, -12, "b"], [1000, 3, "r"], [1025, -12, "b"]],
};

@customElement("candle-chart")
class CandleChart extends LitElement {
  @property({ attribute: false }) d!: Chart;

  static styles = [base, css`
    :host { display: flex; flex-direction: column; min-height: 0; background: #181818; }
    .plot { flex: 1; min-height: 0; width: 100%; }
    .lab { font: 12px "DejaVu Sans Condensed", "Noto Sans", sans-serif; fill: #ededed; }
    .mark { font-family: "DejaVu Sans Condensed", "Noto Sans", sans-serif; text-anchor: middle; }
    .scroll { flex: none; height: 20px; display: flex; align-items: center; justify-content: space-between; background: #2d2d30; padding: 0 8px 0 6px; }
    .thumb { margin-left: auto; margin-right: 8px; width: 25px; height: 16px; background: #434346; }
  `];

  render() {
    const d = this.d, k = d.plot;
    const X = (x: number) => Math.round((x - k.x0) / k.kx);
    const Y = (y: number) => (y - k.y0) / k.ky;
    const zero = 365;
    return html`
      <svg class="plot" viewBox="0 0 ${d.w} ${d.h}" preserveAspectRatio="xMinYMin meet">
        ${d.labels.map(([, y]) => svg`<path d="M0 ${y + 0.5}H${d.axis}" stroke="#202020"/>`)}
        ${d.vgrid.map((x) => svg`<path d="M${x + 0.5} 0V${d.foot}" stroke="#262626"/><path d="M${x + 0.5} ${d.foot - 5}v5" stroke="#777"/>`)}
        <text class="mark" x=${d.markAt[0]} y=${d.markAt[1]} font-size=${d.markAt[2]} fill=${d.markColor}>${d.mark}</text>
        ${d.candles.map((c) => {
          const [x, a, b, o, e] = c as number[];
          const col = c[5] === "c" ? "#5ccfc6" : "#b3062a";
          return svg`<rect x=${X(x)} y=${Y(a)} width="1" height=${Y(b) - Y(a)} fill=${col}/><rect x=${X(x) - 1} y=${Y(o)} width="3" height=${Math.max(1, Y(e) - Y(o))} fill=${col}/>`;
        })}
        ${(d.volume ?? []).map((c) => {
          const [x, h] = c as number[];
          return svg`<rect x=${X(x) - 1} y=${h < 0 ? zero + h : zero} width="3" height=${Math.abs(h)} fill=${c[2] === "b" ? "#3c8ee0" : "#a32638"}/>`;
        })}
        ${d.volume ? svg`<path d="M0 ${zero + 0.5}H360" stroke="#6f86a0" stroke-dasharray="3 1"/><path d="M0 ${d.split! + 0.5}H${d.w}" stroke="#777"/>
          <g fill="none" stroke="#8a8a8a"><rect x="442.500" y="228.500" width="10" height="10"/><path d="M443 229l9 9M452 229l-9 9"/></g>` : nothing}
        <path d="M${d.axis + 0.5} 0V${d.h}M0 ${d.foot + 0.5}H${d.axis}" stroke="#8b8b8b"/>
        <path d="M${d.from} ${d.tag[1] + 0.5}H${d.axis}" stroke=${d.tag[2]}/>
        ${d.labels.map(([t, y]) => svg`<path d="M${d.axis} ${y + 0.5}h4" stroke="#8b8b8b"/><text class="lab" x=${d.axis + 7} y=${y + 4}>${t}</text>`)}
        ${[d.tag, d.tag2].map((t) => (t ? svg`<rect x=${d.axis} y=${t[1] - 6} width=${d.w - d.axis} height="12" fill=${t[2]}/><text class="lab" x=${d.axis + 7} y=${t[1] + 4}>${t[0]}</text>` : nothing))}
        ${d.times.map(([t, x]) => svg`<text class="lab" x=${x} y=${d.foot + 11}>${t}</text>`)}
        <g fill="none" stroke="#8a8a8a"><rect x=${d.play[0] + 0.5} y=${d.play[1] + 0.5} width="20" height="20"/>
          <path d="M${d.play[0] + 4.5} ${d.play[1] + 5}v11l8-5.500zM${d.play[0] + 13.5} ${d.play[1] + 5}v11M${d.play[0] + 16.5} ${d.play[1] + 5}v11"/></g>
      </svg>
      <div class="scroll"><svg width="5" height="8" viewBox="0 0 5 8" aria-hidden="true"><path d="M5 0v8L0 4z" fill="#ccc"/></svg><span class="thumb"></span><svg width="5" height="8" viewBox="0 0 5 8" aria-hidden="true"><path d="M0 0v8l5-4z" fill="#ccc"/></svg></div>`;
  }
}

/* ---------- quotes ---------- */
const QUOTES = `ABIO|-0,09%|0,20|20
ABRD|0,26%|2,00|13
AFKS|-0,14%|0,10|495
AFLT|-0,38%|0,10|508
AKRN|-0,36%|2,00|3
ALRS|-0,20%|0,10|268
APRI|0,00%|0,05|
APTK|0,00%|0,02|21
AQUA|0,40%|0,10|83
ARSA|0,85%|1,00|3
ASSB|0,00%|5,00|
ASTR|0,27%|0,05|72
AVAN|0,28%|1,00|8
BANE|0,13%|0,50|38
BANEP|0,28%|0,50|99
BAZA|0,21%|0,20|44
BELU|-0,16%|0,20|73
BISVP|-0,38%|1,00|23
BLNG|-0,31%|2,00|4
BRZL|0,27%|2,00|27
BSPB|0,37%|0,10|45
BSPBP|-0,26%|0,05|34
CARM|-0,39%|0,01|27
CBOM|-0,38%|0,10|555
CHGZ|0,00%|30,00|112
CHKZ|0,00%|50,00|
CHMF|-0,20%|0,20|404
CHMK|0,00%|1,00|
CNRU|0,28%|0,20|40
CNTL|0,43%|2,00|7
CNTLP|-0,38%|1,00|1
DATA|0,54%|0,02|642
DELI|0,51%|0,05|78
DIAS|0,30%|0,50|27`.split("\n").map((r) => r.split("|"));

@customElement("quotes-panel")
class QuotesPanel extends LitElement {
  static styles = [base, css`
    :host { display: flex; flex-direction: column; min-height: 0; overflow: hidden; background: #252526; font: 12px/15px "DejaVu Sans Condensed", "Noto Sans", sans-serif; color: #ececec; }
    .tools { flex: none; display: grid; grid-template-columns: 17px repeat(6, 38px); grid-template-rows: 28px 28px; border-bottom: 2px solid #38383b; }
    .grip { grid-row: 1 / 3; align-self: center; justify-self: center; width: 2px; height: 14px; background: repeating-linear-gradient(#5a5a5a 0 2px, transparent 2px 4px); }
    .tool { display: flex; align-items: center; justify-content: center; gap: 4px; }
    .first { grid-column: 2; }
    .plus { padding-left: 10px; }
    .grid { flex: 1; min-height: 0; display: grid; grid-template-columns: minmax(0, 1fr) 16px; grid-template-rows: minmax(0, 1fr) 18px; }
    .wrap { grid-column: 1 / 3; grid-row: 1; overflow: hidden; }
    table { width: 100%; table-layout: fixed; border-collapse: collapse; }
    th { height: 24px; padding: 0 0 0 7px; font-weight: normal; text-align: left; white-space: nowrap; overflow: hidden; color: #c9c9c9; }
    th:nth-child(2) { padding-left: 4px; }
    th svg { display: inline-block; margin-left: 4px; }
    td { height: 21px; padding: 0 4px; text-align: right; border-right: 1px solid #39393c; border-bottom: 1px solid #39393c; white-space: nowrap; }
    td:nth-child(2) { text-align: left; }
    tr.cur td { background: #343437; }
    .up { color: #1f7d28; }
    .dn { color: #b30a20; }
    .cur .dn { color: #d98a9e; }
    .v { grid-column: 2; grid-row: 1; margin-top: 24px; z-index: 1; background: #2d2d30; display: flex; flex-direction: column; align-items: center; justify-content: space-between; padding: 6px 0; }
    .v .thumb { width: 16px; height: 94px; background: #47474a; margin: 4px 0 auto; }
    .h { grid-column: 1 / 3; display: flex; align-items: center; background: #2d2d30; padding: 0 24px 0 9px; }
    .h .thumb { width: 63px; height: 16px; background: #3f3f42; margin: 0 auto 0 5px; }
  `];
  render() {
    const tool = (n: string, first = false) => html`<button class="tool ${first ? "first" : ""}" aria-label=${n}>${icon(n, 15)}</button>`;
    return html`
      <div class="tools"><span class="grip"></span>
        <button class="tool plus" aria-label="add">${icon("add", 14)}${caret("#fff")}</button>
        ${["up", "down", "del", "eraser", "frame"].map((n) => tool(n))}
        ${["bell", "pencil", "star", "funnel"].map((n, i) => tool(n, i === 0))}
      </div>
      <div class="grid">
        <div class="wrap"><table>
          <colgroup><col style="width:32px"><col style="width:51px"><col style="width:50px"><col style="width:48px"><col style="width:61px"><col></colgroup>
          <thead><tr><th>И...</th><th>Тик...<svg width="10" height="8" viewBox="0 0 10 8" aria-hidden="true"><path d="M0 1h3M0 3.500h6M0 6.500h9" stroke="#888"/></svg></th><th>Изме...</th><th>Ст. ...</th><th>Сделки</th><th>Объ</th></tr></thead>
          <tbody>${QUOTES.map(([a, b, c, e], i) => html`<tr class=${i === 0 ? "cur" : ""}><td></td><td>${a}</td><td class=${b[0] === "-" ? "dn" : b === "0,00%" ? "" : "up"}>${b}</td><td>${c}</td><td>${e}</td><td></td></tr>`)}</tbody>
        </table></div>
        <div class="v"><svg width="8" height="5" viewBox="0 0 8 5" aria-hidden="true"><path d="M0 5h8L4 0z" fill="#ccc"/></svg><span class="thumb"></span><svg width="8" height="5" viewBox="0 0 8 5" aria-hidden="true"><path d="M0 0h8L4 5z" fill="#999"/></svg></div>
        <div class="h"><svg width="5" height="8" viewBox="0 0 5 8" aria-hidden="true"><path d="M5 0v8L0 4z" fill="#ccc"/></svg><span class="thumb"></span><svg width="5" height="8" viewBox="0 0 5 8" aria-hidden="true"><path d="M0 0v8l5-4z" fill="#ccc"/></svg></div>
      </div>`;
  }
}

/* ---------- application ---------- */
@customElement("app-root")
class AppRoot extends LitElement {
  static styles = [base, css`
    :host { box-sizing: border-box; display: flex; flex-direction: column; height: 100vh; overflow: hidden; background: #000; padding: 8px 0 36px; font: 12px/16px "DejaVu Sans Condensed", "Noto Sans", sans-serif; color: #e8e8e8; }
    header { flex: none; height: 30px; display: flex; align-items: center; background: #232324; border-bottom: 2px solid #38383a; padding: 0 0 0 7px; }
    .app { display: flex; align-items: center; gap: 15px; }
    .app > * { width: 15px; height: 15px; }
    .status { margin-left: auto; display: flex; align-items: center; }
    .checks { display: flex; gap: 16px; padding-right: 12px; border-right: 1px solid #38383a; }
    .orders { display: flex; align-items: center; gap: 6px; margin-left: 10px; font-size: 11px; }
    .orders.off { color: #4c4c4e; margin-left: 17px; }
    .clock { margin-left: 13px; font-weight: bold; }
    .win { display: flex; margin-left: 12px; }
    .win button { width: 36px; height: 24px; display: grid; place-items: center; }
    main { flex: 1; min-height: 0; display: grid; gap: 8px; background: #2d2d30;
      grid-template-columns: 504fr 256fr 264fr 232fr 236fr 276fr 252fr 252fr 272fr 283fr 262fr 263fr;
      grid-template-rows: minmax(0, 655fr) minmax(0, 671fr); }
    main > * { min-width: 0; min-height: 0; }
    .leftside { grid-row: 1 / 3; grid-column: 1; display: grid; gap: 8px; grid-template-rows: minmax(0, 845fr) minmax(0, 481fr); }
    .upper { display: grid; grid-template-columns: 272fr 221fr; gap: 11px; min-height: 0; }
    .pair { display: grid; gap: 8px; grid-template-rows: minmax(0, 300fr) minmax(0, 347fr); }
    footer { flex: none; height: 32px; display: flex; background: #2d2d30; border-top: 1px solid #3c3c3e; }
    footer div { display: flex; align-items: center; height: 26px; gap: 12px; padding: 0 12px; background: #252526; border-right: 4px solid #2d2d30; }
    footer .search { padding-right: 32px; }
    footer .on { color: #7fb0e8; background: #2d2d30; padding: 0 8px; }
    footer .last { padding-right: 33px; padding-left: 8px; }
  `];

  private ladder(p: Panel) {
    return html`<dock-panel .tabs=${p.tabs} .tools=${p.tools} ?active=${!!p.active}><price-ladder .d=${p.ladder}></price-ladder></dock-panel>`;
  }

  render() {
    const check = html`<svg width="14" height="14" viewBox="0 0 14 14" aria-hidden="true"><circle cx="7" cy="7" r="6.500" fill="#8fcf98"/><path d="M3.500 7l2.500 2.700 4.500-5" fill="none" stroke="#1d3a20" stroke-width="1.800"/></svg>`;
    const cross = (c: string) => html`<svg width="12" height="12" viewBox="0 0 12 12" aria-hidden="true"><path d="M1 1l10 10M11 1 1 11" stroke=${c} stroke-width="2"/></svg>`;
    const chartTools = ["gears", "brief", "clock", "copy", "|", "line"];
    return html`
      <header>
        <div class="app">
          <svg viewBox="0 0 15 15" aria-hidden="true"><path d="M10.500 0H15L9 15H4.500z" fill="#2fe0a0"/><path d="M0 3.500h5.500L7 8l-2 4z" fill="#1fae83"/></svg>
          <button aria-label="Добавить"><svg viewBox="0 0 15 15"><circle cx="7.500" cy="7.500" r="6.500" fill="#b9dcae"/><path d="M7.500 4v7M4 7.500h7" stroke="#232324" stroke-width="2"/></svg></button>
          <button aria-label="Таблица"><svg viewBox="0 0 15 15"><path d="M0 1h15v4H0z" fill="#8ebce8"/><path d="M0 6.500h4v3H0zM5.500 6.500h4v3h-4zM11 6.500h4v3h-4zM5.500 11h4v3h-4zM11 11h4v3h-4z" fill="#8f8583"/></svg></button>
          <button aria-label="Настройки"><svg viewBox="0 0 15 15">${gear(7.5, 7.5, 4.8, "#9cc8ee", "#232324")}</svg></button>
          <button aria-label="Справка"><svg viewBox="0 0 15 15"><circle cx="7.500" cy="7.500" r="7" fill="#8fd68a"/><path d="M5.200 5.800c0-3 4.600-3 4.600-.3 0 1.800-2.200 1.600-2.200 3.500M7.500 10.500v1.600" fill="none" stroke="#1d3a20" stroke-width="1.600"/></svg></button>
        </div>
        <div class="status">
          <span class="checks">${check}${check}${check}</span>
          <button class="orders">${cross("#d8605c")}Заявок: 1</button>
          <button class="orders off">${cross("#4c4c4e")}Позиций:0</button>
          <span class="clock">7:16:12</span>
          <span class="win">
            <button aria-label="Свернуть"><svg width="10" height="10"><path d="M1 5.500h8" stroke="#ddd" stroke-width="1.500"/></svg></button>
            <button aria-label="Окно"><svg width="10" height="10"><path d="M1 3.500h6v6H1zM3 3.500V1h6.500v6H7" fill="none" stroke="#ddd"/></svg></button>
            <button aria-label="Выход"><svg width="10" height="10"><path d="M1 1l8 8M9 1 1 9" stroke="#ddd" stroke-width="1.400"/></svg></button>
          </span>
        </div>
      </header>
      <main>
        <div class="leftside">
          <div class="upper">
            <dock-panel .tabs=${["Котировки", "Статистика"]} selected="0" plain><quotes-panel></quotes-panel></dock-panel>
            ${this.ladder(JNOSP)}
          </div>
          <dock-panel .tabs=${["CBOM 1S"]} .tools=${["gears", "brief", "clock", "copy", "|", "line", "candles", "brush", "bars", "|", "zin", "zout", "zoom"]}><candle-chart .d=${CBOM1S}></candle-chart></dock-panel>
        </div>
        ${TOP.map((p) => p ? this.ladder(p) : html`<div class="pair">
          <dock-panel .tabs=${["BRK6 1M"]} .tools=${chartTools}><candle-chart .d=${BRK6}></candle-chart></dock-panel>
          <dock-panel .tabs=${["GDM6 1M"]} .tools=${chartTools}><candle-chart .d=${GDM6}></candle-chart></dock-panel></div>`)}
        ${BOTTOM.map((p) => this.ladder(p))}
      </main>
      <footer>
        <div class="search"><button>ПОИСК</button></div>
        <div class="on"><button>ОСН</button><button aria-label="Закрыть">${closeDot}</button></div>
        <div class="last"><button>НЕЛИК</button></div>
        <div><button aria-label="Новая вкладка">+</button></div>
      </footer>`;
  }
}
